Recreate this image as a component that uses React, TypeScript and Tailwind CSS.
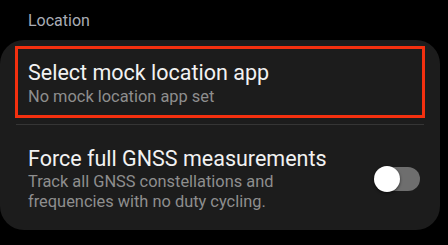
import React from 'react'

function Toggle({ on = false }: { on?: boolean }) {
  return (
    <div className="relative w-[46px] h-[24px] shrink-0">
      <div className="absolute left-[6px] top-0 w-[40px] h-[24px] rounded-full bg-[#6e6e6e]" />
      <div
        className={`absolute top-[-1px] w-[26px] h-[26px] rounded-full bg-white shadow-[0_1px_3px_rgba(0,0,0,0.6)] ${on ? 'left-[20px]' : 'left-0'}`}
      />
    </div>
  )
}

export default function App() {
  return (
    <div className="w-[448px] h-[245px] bg-black overflow-hidden" style={{ fontFamily: 'Roboto, "Noto Sans", sans-serif' }}>
      <div className="pl-[28px] pt-[11px] h-[40px] text-[16px] text-[#a9adb6] leading-[20px]">Location</div>

      <div className="w-[440px] h-[190px] bg-[#1c1c1c] rounded-[24px] pt-[6px]">
        <div className="mx-[15px] h-[72px] border-[3px] border-[#f3300f] pl-[10px] pt-[10px]">
          <div className="text-[21.5px] leading-[27px] text-[#f2f2f2]">Select mock location app</div>
          <div className="text-[16.4px] leading-[22px] text-[#8e8e8e]">No mock location app set</div>
        </div>

        <div className="mt-[6px] mx-[16px] h-px bg-[#353535]" />

        <div className="flex items-center pl-[28px] pr-[20px] pt-[20px]">
          <div className="flex-1">
            <div className="text-[21.5px] leading-[27px] text-[#f2f2f2]">Force full GNSS measurements</div>
            <div className="text-[16.4px] leading-[20px] text-[#8e8e8e]">
              Track all GNSS constellations and
              <br />
              frequencies with no duty cycling.
            </div>
          </div>
          <Toggle />
        </div>
      </div>
    </div>
  )
}
